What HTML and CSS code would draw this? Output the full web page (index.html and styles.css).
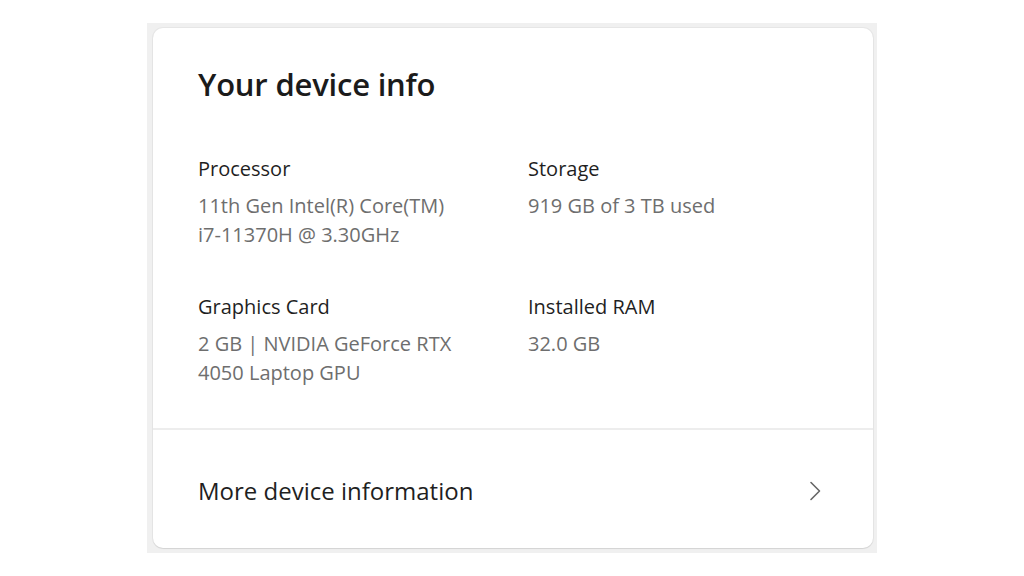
FILE: index.html
```html
<!DOCTYPE html>
<html>
<head>
<meta charset="utf-8">
<link rel="stylesheet" href="styles.css">
</head>
<body>
<div class="frame">
  <div class="card">
    <div class="info">
      <h1 class="title">Your device info</h1>
      <div class="grid">
        <div class="item">
          <div class="label">Processor</div>
          <div class="value">11th Gen Intel(R) Core(TM)<br>i7-11370H @ 3.30GHz</div>
        </div>
        <div class="item">
          <div class="label">Storage</div>
          <div class="value">919 GB of 3 TB used</div>
        </div>
        <div class="item">
          <div class="label">Graphics Card</div>
          <div class="value">2 GB | NVIDIA GeForce RTX<br>4050 Laptop GPU</div>
        </div>
        <div class="item">
          <div class="label">Installed RAM</div>
          <div class="value">32.0 GB</div>
        </div>
      </div>
    </div>
    <div class="more">
      <span class="more-text">More device information</span>
      <svg class="chev" width="14" height="20" viewBox="0 0 14 20"><path d="M3 1.5 L11.5 10 L3 18.5" fill="none" stroke="#666" stroke-width="1.6" stroke-linecap="round" stroke-linejoin="round"/></svg>
    </div>
  </div>
</div>
</body>
</html>
```
FILE: styles.css
```css
html, body { margin: 0; padding: 0; background: #fff; }
body { font-family: "Open Sans", "Noto Sans", sans-serif; }
.frame {
  margin: 23px 0 0 147px;
  width: 730px;
  height: 530px;
  box-sizing: border-box;
  background: #f0f0f0;
  padding: 5px 4px 5px 6px;
}
.card {
  height: 100%;
  background: #fff;
  border-radius: 10px;
  box-shadow: 0 1px 1px rgba(0,0,0,0.08), 0 0 0 1px rgba(0,0,0,0.04);
  display: flex;
  flex-direction: column;
  overflow: hidden;
}
.info {
  padding: 36px 44px 0 45px;
  height: 402px;
  box-sizing: border-box;
  border-bottom: 2px solid #ededed;
}
.title {
  margin: 0;
  font-size: 31px;
  font-weight: 600;
  color: #1b1b1b;
  line-height: 40px;
  letter-spacing: -0.2px;
}
.grid {
  margin-top: 50px;
  display: grid;
  grid-template-columns: 330px 1fr;
  row-gap: 43px;
}
.label {
  font-size: 20px;
  line-height: 29px;
  color: #1f1f1f;
}
.value {
  margin-top: 8px;
  font-size: 20px;
  line-height: 29px;
  color: #6e6e6e;
}
.more {
  flex: 1;
  display: flex;
  align-items: center;
  justify-content: space-between;
  padding: 3px 51px 0 45px;
}
.more-text {
  font-size: 24px;
  color: #1f1f1f;
}
.chev { display: block; }
```
